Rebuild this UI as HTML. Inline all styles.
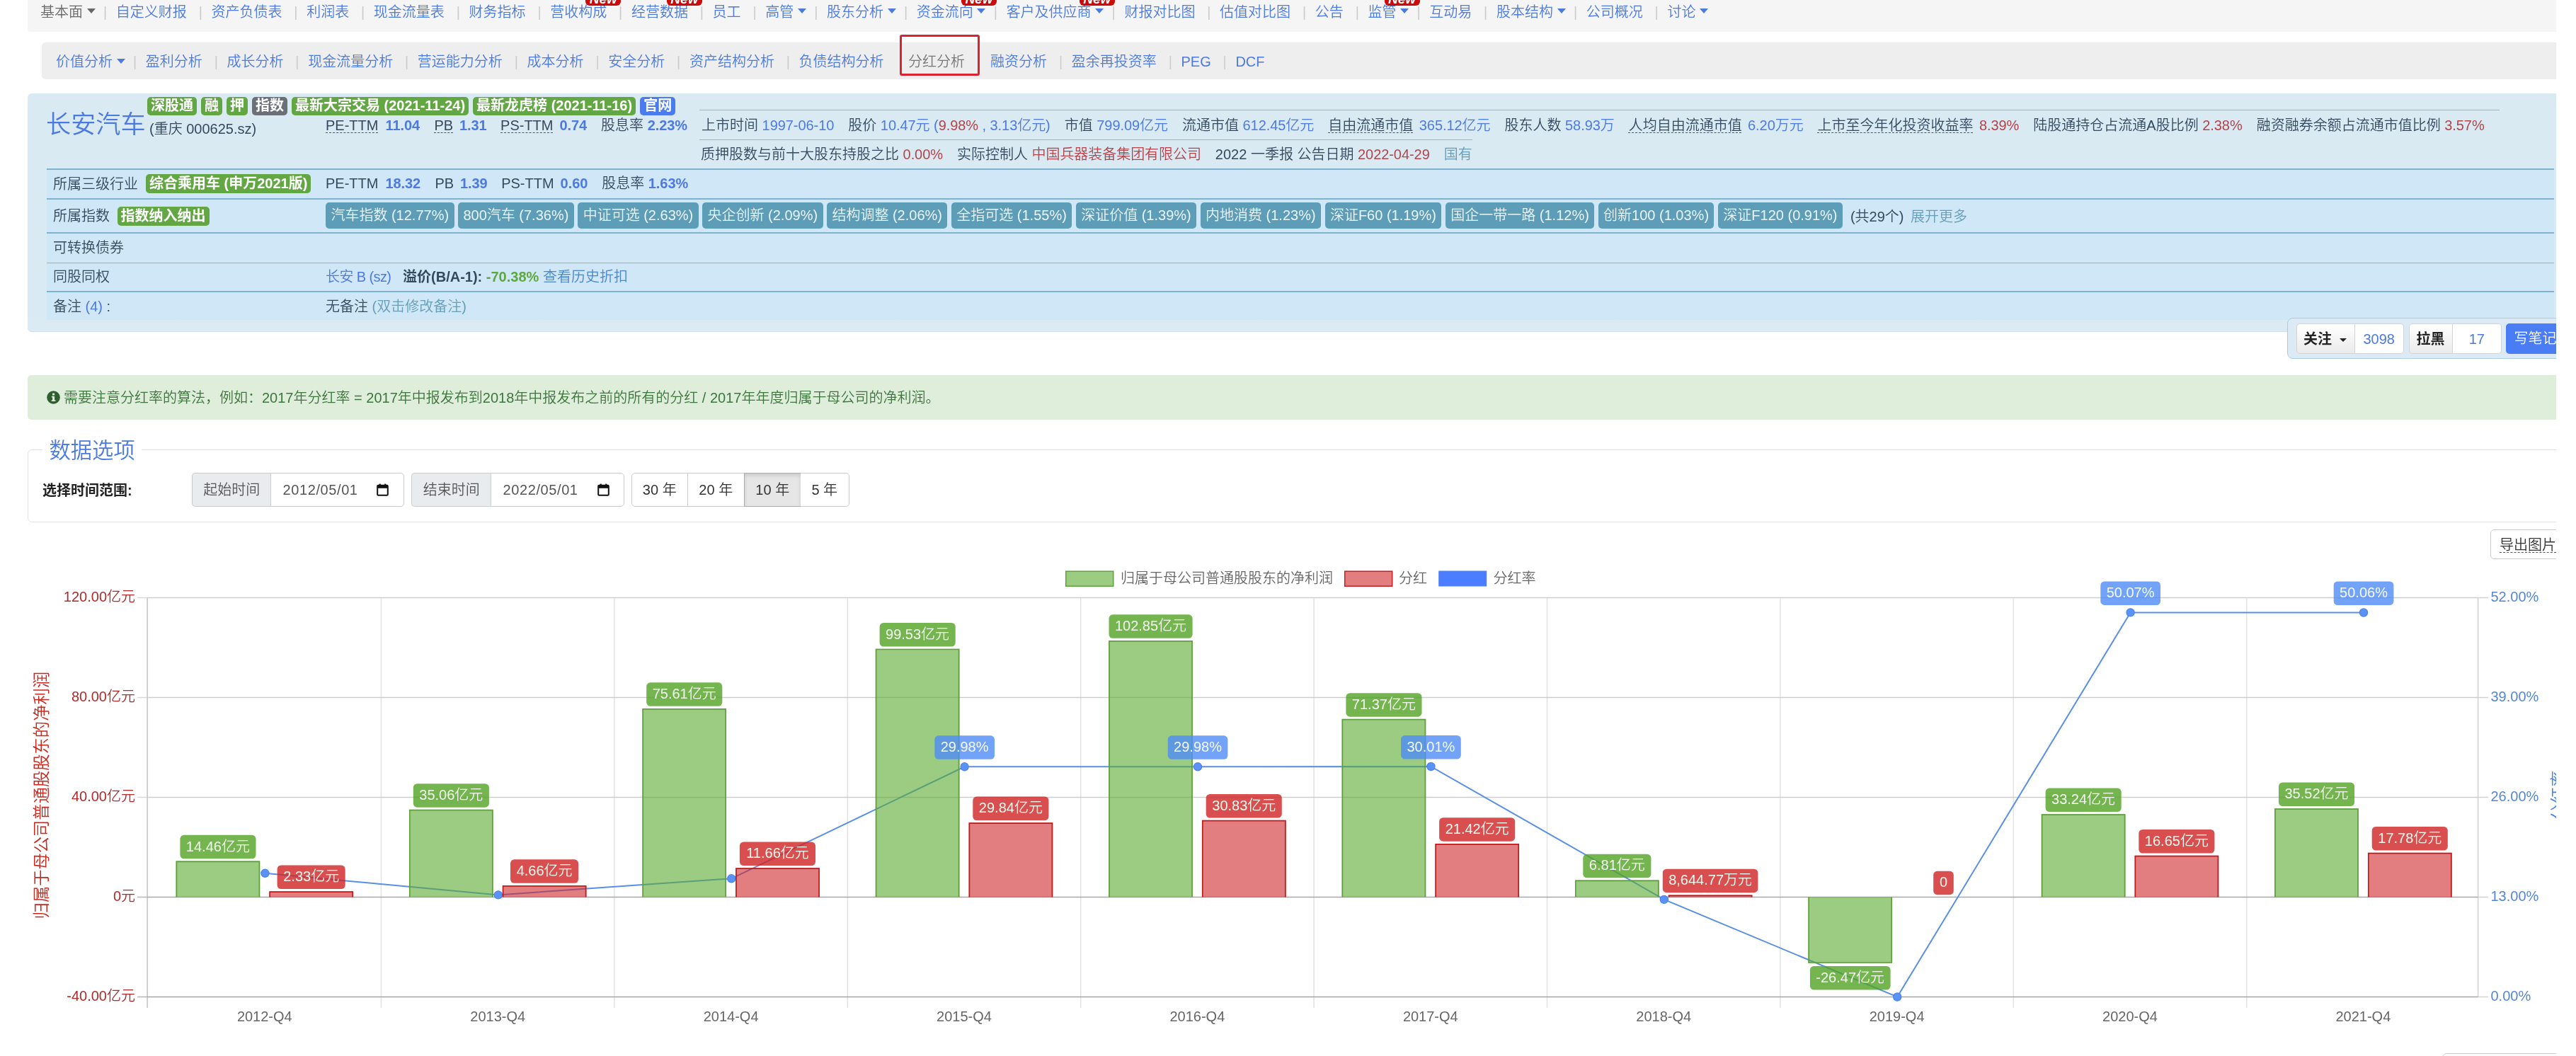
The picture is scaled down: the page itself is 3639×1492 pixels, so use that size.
<!DOCTYPE html><html lang="zh-CN"><head><meta charset="utf-8"><title>长安汽车 分红分析</title><style>
*{box-sizing:border-box;margin:0;padding:0}
html,body{width:3639px;height:1492px;background:#fff}
body{font-family:"Liberation Sans","Noto Sans CJK SC",sans-serif;font-size:20px;color:#333;line-height:1;font-weight:350}
b{font-weight:700}
#clip{position:absolute;left:0;top:0;width:3611px;height:1492px;overflow:hidden;will-change:transform}
.abs{position:absolute;white-space:nowrap}
a,.lk{color:#4c7ae0;text-decoration:none}
/* nav */
.nav{position:absolute;white-space:nowrap;display:flex;align-items:center}
.nav .i{position:relative;display:inline-block}
.nav .s{display:inline-block;width:5px;margin:0 12.85px 0 16.85px;color:#ccc;text-align:center}
.nav .c{display:inline-block;width:0;height:0;border-left:6px solid transparent;border-right:6px solid transparent;border-top:7.2px solid currentColor;margin-left:5.6px;margin-right:-5.5px;vertical-align:middle;position:relative;top:-2.6px}
.new{position:absolute;top:-29px;height:30px;width:50px;background:#cc0a0a;color:#fff;font-weight:bold;font-style:italic;border-radius:6px;font-size:19px;text-align:center;line-height:42px}
#nav1{left:39px;top:0;width:3572px;height:45px;background:#f5f5f5;padding-left:18px;padding-bottom:12px;border-radius:0 0 0 4px}
#nav2{left:59px;top:60px;width:3552px;height:51.5px;background:#eee;border-radius:5px 0 0 5px;padding-left:20px;padding-top:3.4px}
#cur{position:absolute;left:1270.5px;top:49px;width:113.5px;height:58px;border:3.6px solid #d92332;border-radius:3px}
/* panel */
#ptext{color:#34495e}
#panel{position:absolute;left:39px;top:132px;width:3572px;height:337px;background:linear-gradient(#d9eaf3,#d9eaf3 92%,#dcebf3);border-radius:6px 0 0 6px;border-bottom:1.4px solid #cddfe9}
.row{position:absolute;left:66px;width:3542px;background:#d0e7f7;border-top:2px solid #7fb2cf}
.lab{display:inline-block;padding:0 5px;border-radius:5px;color:#fff;font-weight:bold;height:26.2px;line-height:25.5px;background:#62a744;margin-right:6px;vertical-align:top}
.tag{display:inline-block;height:36.5px;line-height:36.6px;padding:0 7.4px;margin-right:5.5px;border-radius:5px;background:#5d9db8;color:#eaf5fb}
.v{color:#4c7ae0;letter-spacing:-0.06px}
.vb{color:#4c7ae0;font-weight:bold;letter-spacing:-0.06px}
.r{color:#b5434a;letter-spacing:-0.06px}
.t{color:#659eb6}
.it{margin-right:20px}
.du{text-decoration:underline dashed #555;text-decoration-thickness:1.4px;text-underline-offset:2.6px}
</style></head><body><div id="clip">
<div id="nav1" class="nav lk"><span class="i" style="color:#686868">基本面<span class="c"></span></span><span class="s">|</span><span class="i">自定义财报</span><span class="s">|</span><span class="i">资产负债表</span><span class="s">|</span><span class="i">利润表</span><span class="s">|</span><span class="i">现金流量表</span><span class="s">|</span><span class="i">财务指标</span><span class="s">|</span><span class="i">营收构成<span class="new" style="right:-20px">New</span></span><span class="s">|</span><span class="i">经营数据<span class="new" style="right:-20px">New</span></span><span class="s">|</span><span class="i">员工</span><span class="s">|</span><span class="i">高管<span class="c"></span></span><span class="s">|</span><span class="i">股东分析<span class="c"></span></span><span class="s">|</span><span class="i">资金流向<span class="c"></span><span class="new" style="right:-21px">New</span></span><span class="s">|</span><span class="i">客户及供应商<span class="c"></span><span class="new" style="right:-21px">New</span></span><span class="s">|</span><span class="i">财报对比图</span><span class="s">|</span><span class="i">估值对比图</span><span class="s">|</span><span class="i">公告</span><span class="s">|</span><span class="i">监管<span class="c"></span><span class="new" style="right:-21px">New</span></span><span class="s">|</span><span class="i">互动易</span><span class="s">|</span><span class="i">股本结构<span class="c"></span></span><span class="s">|</span><span class="i">公司概况</span><span class="s">|</span><span class="i">讨论<span class="c"></span></span></div>
<div id="nav2" class="nav lk"><span class="i">价值分析<span class="c"></span></span><span class="s">|</span><span class="i">盈利分析</span><span class="s">|</span><span class="i">成长分析</span><span class="s">|</span><span class="i">现金流量分析</span><span class="s">|</span><span class="i">营运能力分析</span><span class="s">|</span><span class="i">成本分析</span><span class="s">|</span><span class="i">安全分析</span><span class="s">|</span><span class="i">资产结构分析</span><span class="s">|</span><span class="i">负债结构分析</span><span class="i" style="color:#777;margin:0 36px 0 34.5px">分红分析</span><span class="i">融资分析</span><span class="s">|</span><span class="i">盈余再投资率</span><span class="s">|</span><span class="i">PEG</span><span class="s">|</span><span class="i">DCF</span></div>
<div id="cur"></div>
<div id="panel"></div><div id="ptext">
<div class="abs lk" style="left:65px;top:155.5px;font-size:35.2px;line-height:40px">长安汽车</div>
<div class="abs" style="left:211px;top:169.5px;line-height:24px">(重庆 000625.sz)</div>
<div class="abs" style="left:208px;top:137px"><span class="lab">深股通</span><span class="lab">融</span><span class="lab">押</span><span class="lab" style="background:#6b6f78">指数</span><span class="lab">最新大宗交易 (2021-11-24)</span><span class="lab">最新龙虎榜 (2021-11-16)</span><span class="lab" style="background:#4a7cf0">官网</span></div>
<div class="abs" style="left:460px;top:165px;line-height:24px"><span class="du">PE-TTM</span><span class="vb" style="margin:0 20.3px 0 10px">11.04</span><span class="du">PB</span><span class="vb" style="margin:0 19.5px 0 8.8px">1.31</span><span class="du">PS-TTM</span><span class="vb" style="margin:0 19.9px 0 9px">0.74</span>股息率<span class="vb" style="margin-left:5.6px">2.23%</span></div>
<div class="abs" style="left:988px;top:154.5px;width:2543px;border-top:1.4px solid #8ab9d2"></div>
<div class="abs" style="left:988px;top:197px;width:1092px;border-top:1.4px solid #8ab9d2"></div>
<div class="abs" style="left:991px;top:165px;line-height:24px"><span class="it">上市时间 <span class="v">1997-06-10</span></span><span class="it">股价 <span class="v">10.47元 (<span class="r">9.98%</span> , 3.13亿元)</span></span><span class="it">市值 <span class="v">799.09亿元</span></span><span class="it">流通市值 <span class="v">612.45亿元</span></span><span class="it"><span class="du">自由流通市值</span><span class="v" style="margin-left:8.5px">365.12亿元</span></span><span class="it">股东人数 <span class="v">58.93万</span></span><span class="it"><span class="du">人均自由流通市值</span><span class="v" style="margin-left:8.3px">6.20万元</span></span><span class="it"><span class="du">上市至今年化投资收益率</span><span class="r" style="margin-left:8.3px">8.39%</span></span><span class="it">陆股通持仓占流通A股比例 <span class="r">2.38%</span></span><span class="it">融资融券余额占流通市值比例 <span class="r">3.57%</span></span></div>
<div class="abs" style="left:990px;top:206px;line-height:24px"><span class="it">质押股数与前十大股东持股之比 <span class="r">0.00%</span></span><span class="it">实际控制人 <span class="r">中国兵器装备集团有限公司</span></span><span class="it">2022 一季报 公告日期 <span class="r">2022-04-29</span></span><span class="t">国有</span></div>
<div class="row" style="top:238px;height:41.5px;border-top-width:2px"></div>
<div class="row" style="top:279.5px;height:48.5px;border-top-width:2px"></div>
<div class="row" style="top:328px;height:42px;border-top-width:2px"></div>
<div class="row" style="top:370.5px;height:40.5px;border-top-width:1.5px"></div>
<div class="row" style="top:411px;height:41px;border-top-width:2px"></div>
<div class="abs" style="left:75px;top:248px;line-height:24px">所属三级行业</div>
<div class="abs" style="left:206px;top:246px"><span class="lab" style="height:27px;line-height:26px">综合乘用车 (申万2021版)</span></div>
<div class="abs" style="left:460px;top:247.2px;line-height:24px"><span>PE-TTM</span><span class="vb" style="margin:0 20.3px 0 10px">18.32</span><span>PB</span><span class="vb" style="margin:0 19.5px 0 8.8px">1.39</span><span>PS-TTM</span><span class="vb" style="margin:0 19.9px 0 9px">0.60</span>股息率<span class="vb" style="margin-left:5.6px">1.63%</span></div>
<div class="abs" style="left:75px;top:293px;line-height:24px">所属指数</div>
<div class="abs" style="left:165.5px;top:291.5px"><span class="lab" style="height:27px;line-height:26px">指数纳入纳出</span></div>
<div class="abs" style="left:460px;top:286px"><span class="tag">汽车指数 (12.77%)</span><span class="tag">800汽车 (7.36%)</span><span class="tag">中证可选 (2.63%)</span><span class="tag">央企创新 (2.09%)</span><span class="tag">结构调整 (2.06%)</span><span class="tag">全指可选 (1.55%)</span><span class="tag">深证价值 (1.39%)</span><span class="tag">内地消费 (1.23%)</span><span class="tag">深证F60 (1.19%)</span><span class="tag">国企一带一路 (1.12%)</span><span class="tag">创新100 (1.03%)</span><span class="tag">深证F120 (0.91%)</span><span style="margin-left:5.5px;position:relative;top:1.5px">(共29个)</span> <span class="t" style="margin-left:4px;position:relative;top:1.5px">展开更多</span></div>
<div class="abs" style="left:75px;top:338px;line-height:24px">可转换债券</div>
<div class="abs" style="left:75px;top:379px;line-height:24px">同股同权</div>
<div class="abs" style="left:460px;top:379px;line-height:24px"><span class="v" style="letter-spacing:-0.6px">长安 B (sz)</span>&nbsp;&nbsp; <b>溢价(B/A-1):</b> <b style="color:#5fa83f">-70.38%</b> <span style="color:#4a86c8">查看历史折扣</span></div>
<div class="abs" style="left:75px;top:421px;line-height:24px">备注 <span class="v">(4)</span> :</div>
<div class="abs" style="left:460px;top:421px;line-height:24px">无备注 <span class="t">(双击修改备注)</span></div>
</div>
<style>
#fbox{position:absolute;left:3231px;top:449.3px;width:420px;height:58.2px;background:#dceaf5;border:1.5px solid #a9cce0;border-radius:8px}
.btn{position:absolute;top:457.3px;height:42.6px;line-height:42.5px;text-align:center;border:1.4px solid #d4d4d4;background:linear-gradient(#fff,#ebebeb);color:#222;font-weight:700}
.cnt{position:absolute;top:457.3px;height:42.6px;line-height:42.5px;text-align:center;border:1.4px solid #d4d4d4;border-left:0;background:#fff;color:#4c7ae0}
#alert{position:absolute;left:39px;top:530px;width:3572px;height:63px;background:#dfeedb;border-radius:5px 0 0 5px;color:#3c763d}
#fs{position:absolute;left:39px;top:635px;width:3600px;height:102.7px;border:1.4px solid #e3e3e3;border-radius:6px}
.ig{position:absolute;top:668px;height:47.5px;border:1.4px solid #ccc;line-height:46.6px;text-align:center}
.ad{background:#e9ecef;color:#555;border-radius:5px 0 0 5px;border-right:0}
.in{background:#fff;color:#555;border-radius:0 5px 5px 0;text-align:left;padding-left:16.5px;letter-spacing:0.6px}
.bg{background:#fff;color:#333;border-left:0}
</style>
<div id="fbox"></div>
<div class="btn" style="left:3243.5px;width:83px;border-radius:5px 0 0 5px;text-align:left;padding-left:9.5px">关注<span style="display:inline-block;border-left:5px solid transparent;border-right:5px solid transparent;border-top:5.5px solid #222;margin-left:10.5px;vertical-align:middle;position:relative;top:-1px"></span></div>
<div class="cnt" style="left:3326.5px;width:69.5px;border-radius:0 5px 5px 0">3098</div>
<div class="btn" style="left:3402.5px;width:62px;border-radius:5px 0 0 5px">拉黑</div>
<div class="cnt" style="left:3464.5px;width:69.5px;border-radius:0 5px 5px 0">17</div>
<div class="abs" style="left:3540px;top:457.3px;width:90px;height:42.6px;line-height:42.5px;background:#4a7cf3;color:#fff;border-radius:5px;padding-left:11.5px">写笔记</div>
<div id="alert"></div>
<svg class="abs" style="left:66px;top:552px" width="19" height="19" viewBox="0 0 19 19"><circle cx="9.5" cy="9.5" r="9.3" fill="#2f5e30"/><rect x="8.1" y="7.8" width="3" height="7" fill="#dfeedb"/><rect x="6.9" y="7.8" width="3" height="1.6" fill="#dfeedb"/><rect x="6.7" y="13.4" width="5.8" height="1.6" fill="#dfeedb"/><rect x="8" y="3.6" width="3.1" height="2.8" fill="#dfeedb"/></svg>
<div class="abs" style="left:90px;top:549.7px;line-height:24px;color:#3c763d">需要注意分红率的算法，例如：2017年分红率 = 2017年中报发布到2018年中报发布之前的所有的分红 / 2017年年度归属于母公司的净利润。</div>
<div id="fs"></div>
<div class="abs lk" style="left:60px;top:614px;height:46px;line-height:46px;background:#fff;padding:0 9.5px;font-size:30.3px">数据选项</div>
<div class="abs" style="left:60px;top:681px;line-height:24px;font-weight:700;color:#222">选择时间范围:</div>
<div class="ig ad" style="left:271px;width:111.5px">起始时间</div><div class="ig in" style="left:382px;width:188.5px">2012/05/01</div>
<div class="ig ad" style="left:581px;width:112.5px">结束时间</div><div class="ig in" style="left:693px;width:188.5px">2022/05/01</div>
<svg class="abs" style="left:532px;top:683px" width="17" height="18" viewBox="0 0 17 18"><rect x="1.2" y="2.8" width="14.6" height="14" rx="1.2" fill="none" stroke="#111" stroke-width="2"/><rect x="1.2" y="2.8" width="14.6" height="4" fill="#111"/><rect x="3.6" y="0.6" width="2.2" height="3" fill="#111"/><rect x="11.2" y="0.6" width="2.2" height="3" fill="#111"/></svg>
<svg class="abs" style="left:843.5px;top:683px" width="17" height="18" viewBox="0 0 17 18"><rect x="1.2" y="2.8" width="14.6" height="14" rx="1.2" fill="none" stroke="#111" stroke-width="2"/><rect x="1.2" y="2.8" width="14.6" height="4" fill="#111"/><rect x="3.6" y="0.6" width="2.2" height="3" fill="#111"/><rect x="11.2" y="0.6" width="2.2" height="3" fill="#111"/></svg>
<div class="ig bg" style="left:892px;width:79.5px;border-left:1.4px solid #ccc;border-radius:5px 0 0 5px">30 年</div>
<div class="ig bg" style="left:971px;width:80.5px;border-left:1.4px solid #ccc">20 年</div>
<div class="ig bg" style="left:1051px;width:80.5px;border-left:1.4px solid #adadad;background:#e6e6e6;border-color:#adadad;box-shadow:inset 0 3px 5px rgba(0,0,0,.125)">10 年</div>
<div class="ig bg" style="left:1131px;width:68.5px;border-radius:0 5px 5px 0">5 年</div>
<div class="abs" style="left:3518px;top:748.2px;width:140px;height:42.3px;border:1.4px solid #ccc;border-radius:5px;line-height:42px;padding-left:12px;background:#fff;color:#333"><span class="du">导出图片</span></div>
<div class="abs" style="left:3450.5px;top:1488px;width:200px;height:30px;border:1.4px solid #ccc;border-radius:5px"></div>
<svg style="position:absolute;left:0;top:0" width="3611" height="1492" viewBox="0 0 3611 1492" font-family="Liberation Sans, Noto Sans CJK SC, sans-serif" font-size="20">
<line x1="538.5" y1="844.5" x2="538.5" y2="1424.0" stroke="#e2e2e2" stroke-width="1.5"/>
<line x1="867.9" y1="844.5" x2="867.9" y2="1424.0" stroke="#e2e2e2" stroke-width="1.5"/>
<line x1="1197.3" y1="844.5" x2="1197.3" y2="1424.0" stroke="#e2e2e2" stroke-width="1.5"/>
<line x1="1526.7" y1="844.5" x2="1526.7" y2="1424.0" stroke="#e2e2e2" stroke-width="1.5"/>
<line x1="1856.1" y1="844.5" x2="1856.1" y2="1424.0" stroke="#e2e2e2" stroke-width="1.5"/>
<line x1="2185.5" y1="844.5" x2="2185.5" y2="1424.0" stroke="#e2e2e2" stroke-width="1.5"/>
<line x1="2514.9" y1="844.5" x2="2514.9" y2="1424.0" stroke="#e2e2e2" stroke-width="1.5"/>
<line x1="2844.3" y1="844.5" x2="2844.3" y2="1424.0" stroke="#e2e2e2" stroke-width="1.5"/>
<line x1="3173.7" y1="844.5" x2="3173.7" y2="1424.0" stroke="#e2e2e2" stroke-width="1.5"/>
<line x1="208.1" y1="844.5" x2="208.1" y2="1424.0" stroke="#c6c6c6" stroke-width="1.6"/>
<line x1="3500.6" y1="844.5" x2="3500.6" y2="1408.5" stroke="#d4d4d4" stroke-width="1.6"/>
<line x1="194" y1="844.5" x2="208.1" y2="844.5" stroke="#d9d9d9" stroke-width="1.5"/>
<line x1="3500.6" y1="844.5" x2="3515" y2="844.5" stroke="#d2d2d2" stroke-width="1.5"/>
<line x1="208.1" y1="844.5" x2="3500.6" y2="844.5" stroke="#cdcdcd" stroke-width="1.6"/>
<line x1="194" y1="985.5" x2="208.1" y2="985.5" stroke="#d9d9d9" stroke-width="1.5"/>
<line x1="3500.6" y1="985.5" x2="3515" y2="985.5" stroke="#d2d2d2" stroke-width="1.5"/>
<line x1="208.1" y1="985.5" x2="3500.6" y2="985.5" stroke="#cdcdcd" stroke-width="1.6"/>
<line x1="194" y1="1126.5" x2="208.1" y2="1126.5" stroke="#d9d9d9" stroke-width="1.5"/>
<line x1="3500.6" y1="1126.5" x2="3515" y2="1126.5" stroke="#d2d2d2" stroke-width="1.5"/>
<line x1="208.1" y1="1126.5" x2="3500.6" y2="1126.5" stroke="#cdcdcd" stroke-width="1.6"/>
<line x1="194" y1="1267.5" x2="208.1" y2="1267.5" stroke="#b5b5b5" stroke-width="1.5"/>
<line x1="3500.6" y1="1267.5" x2="3515" y2="1267.5" stroke="#d2d2d2" stroke-width="1.5"/>
<line x1="208.1" y1="1267.5" x2="3500.6" y2="1267.5" stroke="#a6a6a6" stroke-width="1.7"/>
<line x1="194" y1="1408.5" x2="208.1" y2="1408.5" stroke="#b5b5b5" stroke-width="1.5"/>
<line x1="3500.6" y1="1408.5" x2="3515" y2="1408.5" stroke="#d2d2d2" stroke-width="1.5"/>
<line x1="208.1" y1="1408.5" x2="3500.6" y2="1408.5" stroke="#a6a6a6" stroke-width="1.7"/>
<text x="191" y="850.1" text-anchor="end" fill="#b02a2a">120.00亿元</text>
<text x="191" y="991.1" text-anchor="end" fill="#b02a2a">80.00亿元</text>
<text x="191" y="1132.1" text-anchor="end" fill="#b02a2a">40.00亿元</text>
<text x="191" y="1273.1" text-anchor="end" fill="#b02a2a">0元</text>
<text x="191" y="1414.1" text-anchor="end" fill="#b02a2a">-40.00亿元</text>
<text x="3518.5" y="850.1" fill="#5587d4">52.00%</text>
<text x="3518.5" y="991.1" fill="#5587d4">39.00%</text>
<text x="3518.5" y="1132.1" fill="#5587d4">26.00%</text>
<text x="3518.5" y="1273.1" fill="#5587d4">13.00%</text>
<text x="3518.5" y="1414.1" fill="#5587d4">0.00%</text>
<text transform="translate(66.5,1123.7) rotate(-90)" text-anchor="middle" font-size="23.3" fill="#c9281e">归属于母公司普通股股东的净利润</text>
<text transform="translate(3622.5,1123.7) rotate(-90)" text-anchor="middle" font-size="23.3" fill="#4a80e8">分红率</text>
<text x="373.8" y="1442.6" text-anchor="middle" fill="#666">2012-Q4</text>
<text x="703.2" y="1442.6" text-anchor="middle" fill="#666">2013-Q4</text>
<text x="1032.6" y="1442.6" text-anchor="middle" fill="#666">2014-Q4</text>
<text x="1362.0" y="1442.6" text-anchor="middle" fill="#666">2015-Q4</text>
<text x="1691.4" y="1442.6" text-anchor="middle" fill="#666">2016-Q4</text>
<text x="2020.8" y="1442.6" text-anchor="middle" fill="#666">2017-Q4</text>
<text x="2350.2" y="1442.6" text-anchor="middle" fill="#666">2018-Q4</text>
<text x="2679.6" y="1442.6" text-anchor="middle" fill="#666">2019-Q4</text>
<text x="3009.0" y="1442.6" text-anchor="middle" fill="#666">2020-Q4</text>
<text x="3338.4" y="1442.6" text-anchor="middle" fill="#666">2021-Q4</text>
<rect x="1505.7" y="807.2" width="67" height="21" fill="rgba(90,170,47,0.6)" stroke="#5fa03c" stroke-width="1.5"/>
<text x="1583" y="824.2" fill="#666">归属于母公司普通股股东的净利润</text>
<rect x="1899.7" y="807.2" width="67" height="21" fill="rgba(207,38,43,0.6)" stroke="#c42020" stroke-width="1.5"/>
<text x="1976" y="824.2" fill="#666">分红</text>
<rect x="2032.2" y="806.5" width="68" height="22" fill="#4a7dff"/>
<text x="2109.5" y="824.2" fill="#666">分红率</text>
<polyline points="374.4,1233.8 703.8,1264.4 1033.2,1241.3 1362.6,1083.3 1692.0,1083.3 2021.4,1083.0 2350.8,1270.9 2680.2,1408.5 3009.6,865.4 3339.0,865.5" fill="none" stroke="#5a8fe6" stroke-width="2"/>
<circle cx="374.4" cy="1233.8" r="5.6" fill="#5b92f5" stroke="#4a82ee" stroke-width="1.2"/>
<circle cx="703.8" cy="1264.4" r="5.6" fill="#5b92f5" stroke="#4a82ee" stroke-width="1.2"/>
<circle cx="1033.2" cy="1241.3" r="5.6" fill="#5b92f5" stroke="#4a82ee" stroke-width="1.2"/>
<circle cx="1362.6" cy="1083.3" r="5.6" fill="#5b92f5" stroke="#4a82ee" stroke-width="1.2"/>
<circle cx="1692.0" cy="1083.3" r="5.6" fill="#5b92f5" stroke="#4a82ee" stroke-width="1.2"/>
<circle cx="2021.4" cy="1083.0" r="5.6" fill="#5b92f5" stroke="#4a82ee" stroke-width="1.2"/>
<circle cx="2350.8" cy="1270.9" r="5.6" fill="#5b92f5" stroke="#4a82ee" stroke-width="1.2"/>
<circle cx="2680.2" cy="1408.5" r="5.6" fill="#5b92f5" stroke="#4a82ee" stroke-width="1.2"/>
<circle cx="3009.6" cy="865.4" r="5.6" fill="#5b92f5" stroke="#4a82ee" stroke-width="1.2"/>
<circle cx="3339.0" cy="865.5" r="5.6" fill="#5b92f5" stroke="#4a82ee" stroke-width="1.2"/>
<rect x="248.6" y="1216.5" width="118.6" height="51.0" fill="rgba(90,170,47,0.6)"/>
<path d="M249.4 1267.5 V1217.3 H366.4 V1267.5" fill="none" stroke="#5fa03c" stroke-width="1.7"/>
<rect x="380.4" y="1259.3" width="118.6" height="8.2" fill="rgba(207,38,43,0.6)"/>
<path d="M381.2 1267.5 V1260.1 H498.2 V1267.5" fill="none" stroke="#c01c1c" stroke-width="1.7"/>
<rect x="578.0" y="1143.9" width="118.6" height="123.6" fill="rgba(90,170,47,0.6)"/>
<path d="M578.8 1267.5 V1144.7 H695.8 V1267.5" fill="none" stroke="#5fa03c" stroke-width="1.7"/>
<rect x="709.8" y="1251.1" width="118.6" height="16.4" fill="rgba(207,38,43,0.6)"/>
<path d="M710.6 1267.5 V1251.9 H827.6 V1267.5" fill="none" stroke="#c01c1c" stroke-width="1.7"/>
<rect x="907.4" y="1001.0" width="118.6" height="266.5" fill="rgba(90,170,47,0.6)"/>
<path d="M908.2 1267.5 V1001.8 H1025.2 V1267.5" fill="none" stroke="#5fa03c" stroke-width="1.7"/>
<rect x="1039.2" y="1226.4" width="118.6" height="41.1" fill="rgba(207,38,43,0.6)"/>
<path d="M1040.0 1267.5 V1227.2 H1157.0 V1267.5" fill="none" stroke="#c01c1c" stroke-width="1.7"/>
<rect x="1236.8" y="916.7" width="118.6" height="350.8" fill="rgba(90,170,47,0.6)"/>
<path d="M1237.6 1267.5 V917.5 H1354.6 V1267.5" fill="none" stroke="#5fa03c" stroke-width="1.7"/>
<rect x="1368.6" y="1162.3" width="118.6" height="105.2" fill="rgba(207,38,43,0.6)"/>
<path d="M1369.4 1267.5 V1163.1 H1486.4 V1267.5" fill="none" stroke="#c01c1c" stroke-width="1.7"/>
<rect x="1566.2" y="905.0" width="118.6" height="362.5" fill="rgba(90,170,47,0.6)"/>
<path d="M1567.0 1267.5 V905.8 H1684.0 V1267.5" fill="none" stroke="#5fa03c" stroke-width="1.7"/>
<rect x="1698.0" y="1158.8" width="118.6" height="108.7" fill="rgba(207,38,43,0.6)"/>
<path d="M1698.8 1267.5 V1159.6 H1815.8 V1267.5" fill="none" stroke="#c01c1c" stroke-width="1.7"/>
<rect x="1895.6" y="1015.9" width="118.6" height="251.6" fill="rgba(90,170,47,0.6)"/>
<path d="M1896.4 1267.5 V1016.7 H2013.4 V1267.5" fill="none" stroke="#5fa03c" stroke-width="1.7"/>
<rect x="2027.4" y="1192.0" width="118.6" height="75.5" fill="rgba(207,38,43,0.6)"/>
<path d="M2028.2 1267.5 V1192.8 H2145.2 V1267.5" fill="none" stroke="#c01c1c" stroke-width="1.7"/>
<rect x="2225.0" y="1243.5" width="118.6" height="24.0" fill="rgba(90,170,47,0.6)"/>
<path d="M2225.8 1267.5 V1244.3 H2342.8 V1267.5" fill="none" stroke="#5fa03c" stroke-width="1.7"/>
<rect x="2356.8" y="1264.5" width="118.6" height="3.0" fill="rgba(207,38,43,0.6)"/>
<path d="M2357.6 1267.5 V1265.3 H2474.6 V1267.5" fill="none" stroke="#c01c1c" stroke-width="1.7"/>
<rect x="2554.4" y="1267.5" width="118.6" height="93.3" fill="rgba(90,170,47,0.6)"/>
<path d="M2555.2 1267.5 V1360.0 H2672.2 V1267.5" fill="none" stroke="#5fa03c" stroke-width="1.7"/>
<rect x="2883.8" y="1150.3" width="118.6" height="117.2" fill="rgba(90,170,47,0.6)"/>
<path d="M2884.6 1267.5 V1151.1 H3001.6 V1267.5" fill="none" stroke="#5fa03c" stroke-width="1.7"/>
<rect x="3015.6" y="1208.8" width="118.6" height="58.7" fill="rgba(207,38,43,0.6)"/>
<path d="M3016.4 1267.5 V1209.6 H3133.4 V1267.5" fill="none" stroke="#c01c1c" stroke-width="1.7"/>
<rect x="3213.2" y="1142.3" width="118.6" height="125.2" fill="rgba(90,170,47,0.6)"/>
<path d="M3214.0 1267.5 V1143.1 H3331.0 V1267.5" fill="none" stroke="#5fa03c" stroke-width="1.7"/>
<rect x="3345.0" y="1204.8" width="118.6" height="62.7" fill="rgba(207,38,43,0.6)"/>
<path d="M3345.8 1267.5 V1205.6 H3462.8 V1267.5" fill="none" stroke="#c01c1c" stroke-width="1.7"/>
<rect x="254.4" y="1179.8" width="107.1" height="33.5" rx="5.5" fill="rgba(81,162,36,0.8)"/><text x="307.9" y="1202.5" text-anchor="middle" fill="#f4faf0">14.46亿元</text>
<rect x="391.6" y="1222.5" width="96.1" height="33.5" rx="5.5" fill="rgba(207,35,35,0.8)"/><text x="439.7" y="1245.1" text-anchor="middle" fill="#f4faf0">2.33亿元</text>
<rect x="583.8" y="1107.2" width="107.1" height="33.5" rx="5.5" fill="rgba(81,162,36,0.8)"/><text x="637.3" y="1129.9" text-anchor="middle" fill="#f4faf0">35.06亿元</text>
<rect x="721.0" y="1214.3" width="96.1" height="33.5" rx="5.5" fill="rgba(207,35,35,0.8)"/><text x="769.1" y="1236.9" text-anchor="middle" fill="#f4faf0">4.66亿元</text>
<rect x="913.2" y="964.3" width="107.1" height="33.5" rx="5.5" fill="rgba(81,162,36,0.8)"/><text x="966.7" y="986.9" text-anchor="middle" fill="#f4faf0">75.61亿元</text>
<rect x="1044.9" y="1189.6" width="107.1" height="33.5" rx="5.5" fill="rgba(207,35,35,0.8)"/><text x="1098.5" y="1212.2" text-anchor="middle" fill="#f4faf0">11.66亿元</text>
<rect x="1242.6" y="880.0" width="107.1" height="33.5" rx="5.5" fill="rgba(81,162,36,0.8)"/><text x="1296.1" y="902.6" text-anchor="middle" fill="#f4faf0">99.53亿元</text>
<rect x="1374.3" y="1125.5" width="107.1" height="33.5" rx="5.5" fill="rgba(207,35,35,0.8)"/><text x="1427.9" y="1148.2" text-anchor="middle" fill="#f4faf0">29.84亿元</text>
<rect x="1566.5" y="868.3" width="118.1" height="33.5" rx="5.5" fill="rgba(81,162,36,0.8)"/><text x="1625.5" y="890.9" text-anchor="middle" fill="#f4faf0">102.85亿元</text>
<rect x="1703.7" y="1122.0" width="107.1" height="33.5" rx="5.5" fill="rgba(207,35,35,0.8)"/><text x="1757.3" y="1144.7" text-anchor="middle" fill="#f4faf0">30.83亿元</text>
<rect x="1901.4" y="979.2" width="107.1" height="33.5" rx="5.5" fill="rgba(81,162,36,0.8)"/><text x="1954.9" y="1001.9" text-anchor="middle" fill="#f4faf0">71.37亿元</text>
<rect x="2033.1" y="1155.2" width="107.1" height="33.5" rx="5.5" fill="rgba(207,35,35,0.8)"/><text x="2086.7" y="1177.8" text-anchor="middle" fill="#f4faf0">21.42亿元</text>
<rect x="2236.3" y="1206.8" width="96.1" height="33.5" rx="5.5" fill="rgba(81,162,36,0.8)"/><text x="2284.3" y="1229.4" text-anchor="middle" fill="#f4faf0">6.81亿元</text>
<rect x="2348.8" y="1227.7" width="134.6" height="33.5" rx="5.5" fill="rgba(207,35,35,0.8)"/><text x="2416.1" y="1250.3" text-anchor="middle" fill="#f4faf0">8,644.77万元</text>
<rect x="2556.9" y="1365.0" width="113.7" height="33.5" rx="5.5" fill="rgba(81,162,36,0.8)"/><text x="2613.7" y="1387.7" text-anchor="middle" fill="#f4faf0">-26.47亿元</text>
<rect x="2731.2" y="1230.7" width="28.6" height="33.5" rx="5.5" fill="rgba(207,35,35,0.8)"/><text x="2745.5" y="1253.4" text-anchor="middle" fill="#f4faf0">0</text>
<rect x="2889.6" y="1113.6" width="107.1" height="33.5" rx="5.5" fill="rgba(81,162,36,0.8)"/><text x="2943.1" y="1136.3" text-anchor="middle" fill="#f4faf0">33.24亿元</text>
<rect x="3021.3" y="1172.0" width="107.1" height="33.5" rx="5.5" fill="rgba(207,35,35,0.8)"/><text x="3074.9" y="1194.7" text-anchor="middle" fill="#f4faf0">16.65亿元</text>
<rect x="3219.0" y="1105.6" width="107.1" height="33.5" rx="5.5" fill="rgba(81,162,36,0.8)"/><text x="3272.5" y="1128.2" text-anchor="middle" fill="#f4faf0">35.52亿元</text>
<rect x="3350.7" y="1168.0" width="107.1" height="33.5" rx="5.5" fill="rgba(207,35,35,0.8)"/><text x="3404.3" y="1190.7" text-anchor="middle" fill="#f4faf0">17.78亿元</text>
<rect x="1320.3" y="1039.3" width="84.7" height="33.5" rx="5.5" fill="rgba(80,140,248,0.8)"/><text x="1362.6" y="1062.0" text-anchor="middle" fill="#f4faf0">29.98%</text>
<rect x="1649.7" y="1039.3" width="84.7" height="33.5" rx="5.5" fill="rgba(80,140,248,0.8)"/><text x="1692.0" y="1062.0" text-anchor="middle" fill="#f4faf0">29.98%</text>
<rect x="1979.1" y="1039.0" width="84.7" height="33.5" rx="5.5" fill="rgba(80,140,248,0.8)"/><text x="2021.4" y="1061.7" text-anchor="middle" fill="#f4faf0">30.01%</text>
<rect x="2967.3" y="821.4" width="84.7" height="33.5" rx="5.5" fill="rgba(80,140,248,0.8)"/><text x="3009.6" y="844.1" text-anchor="middle" fill="#f4faf0">50.07%</text>
<rect x="3296.7" y="821.5" width="84.7" height="33.5" rx="5.5" fill="rgba(80,140,248,0.8)"/><text x="3339.0" y="844.2" text-anchor="middle" fill="#f4faf0">50.06%</text>
</svg>
</div></body></html>
